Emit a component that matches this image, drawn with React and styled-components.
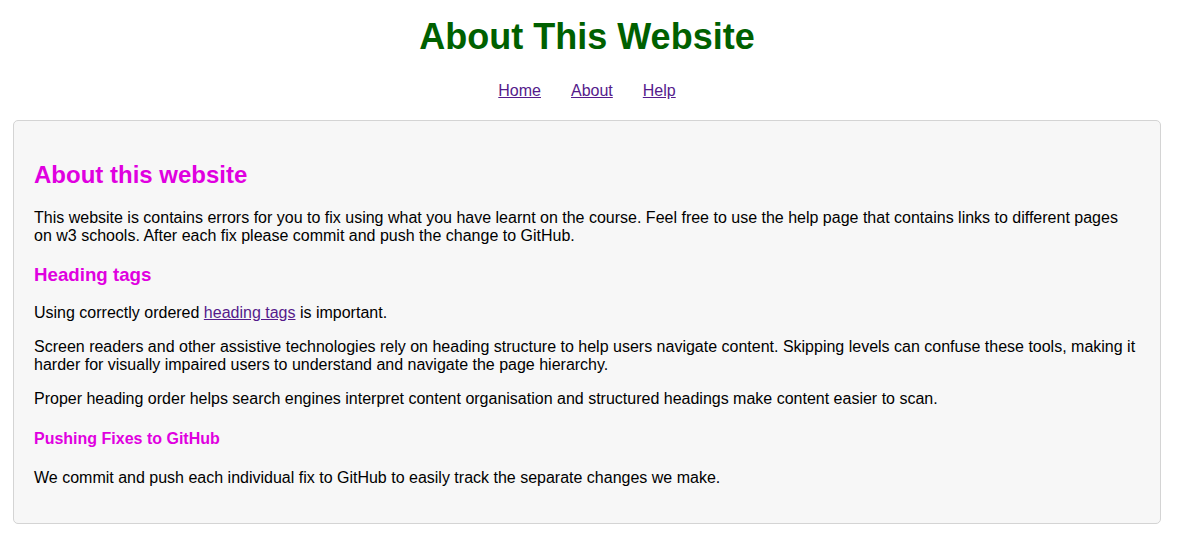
import React from "react";
import styled, { createGlobalStyle } from "styled-components";

const GlobalStyle = createGlobalStyle`
  body {
    margin: 0;
    background: #ffffff;
    font-family: "Liberation Sans", Arial, Helvetica, sans-serif;
    font-size: 16px;
    color: #000000;
  }
`;

const Page = styled.div`
  width: 1148px;
  margin-left: 13px;
  padding-top: 16px;
  padding-bottom: 20px;
`;

const Header = styled.header`
  text-align: center;
`;

const Title = styled.h1`
  margin: 0;
  font-size: 36px;
  font-weight: bold;
  color: #006000;
`;

const Nav = styled.nav`
  display: flex;
  justify-content: center;
  gap: 30px;
  padding: 24px 0 20px;
`;

const NavLink = styled.a`
  color: #551a8b;
  text-decoration: underline;
`;

const Main = styled.main`
  background: #f7f7f7;
  border: 1px solid #d4d4d4;
  border-radius: 5px;
  padding: 20px;
`;

const Heading = styled.h2`
  color: #e000e0;
  font-weight: bold;
  font-size: ${(props) => props.size}px;
  margin: ${(props) => props.gap}px 0;
`;

const Text = styled.p`
  margin: 16px 0;
  line-height: normal;
`;

const InlineLink = styled.a`
  color: #551a8b;
  text-decoration: underline;
`;

export default function App() {
  return (
    <>
      <GlobalStyle />
      <Page>
        <Header>
          <Title>About This Website</Title>
          <Nav>
            <NavLink href="#">Home</NavLink>
            <NavLink href="#">About</NavLink>
            <NavLink href="#">Help</NavLink>
          </Nav>
        </Header>
        <Main>
          <Heading as="h2" size={24} gap={19.92}>
            About this website
          </Heading>
          <Text>
            This website is contains errors for you to fix using what you have
            learnt on the course. Feel free to use the help page that contains
            links to different pages on w3 schools. After each fix please
            commit and push the change to GitHub.
          </Text>
          <Heading as="h3" size={18.72} gap={18.72}>
            Heading tags
          </Heading>
          <Text>
            Using correctly ordered <InlineLink href="#">heading tags</InlineLink>{" "}
            is important.
          </Text>
          <Text>
            Screen readers and other assistive technologies rely on heading
            structure to help users navigate content. Skipping levels can
            confuse these tools, making it harder for visually impaired users
            to understand and navigate the page hierarchy.
          </Text>
          <Text>
            Proper heading order helps search engines interpret content
            organisation and structured headings make content easier to scan.
          </Text>
          <Heading as="h4" size={16} gap={21.28}>
            Pushing Fixes to GitHub
          </Heading>
          <Text>
            We commit and push each individual fix to GitHub to easily track
            the separate changes we make.
          </Text>
        </Main>
      </Page>
    </>
  );
}
